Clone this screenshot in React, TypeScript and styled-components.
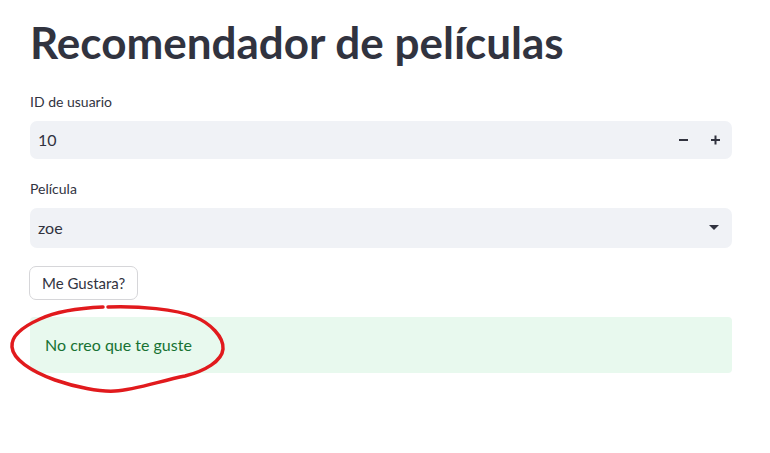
import styled, { createGlobalStyle } from "styled-components";

const GlobalStyle = createGlobalStyle`
  html, body {
    margin: 0;
    padding: 0;
    background: #ffffff;
  }
  body {
    font-family: Lato, "Noto Sans", "Liberation Sans", sans-serif;
    color: #31333f;
  }
`;

const Page = styled.main`
  padding: 16px 38px 40px 30px;
  width: 702px;
`;

const Title = styled.h1`
  margin: 0 0 24px;
  font-size: 44px;
  font-weight: 700;
  line-height: 1.2;
  color: #31333f;
`;

const Field = styled.div<{ $after: number }>`
  display: flex;
  flex-direction: column;
  gap: 10px;
  margin-bottom: ${(p) => p.$after}px;
`;

const Label = styled.label`
  font-size: 14px;
  line-height: 18px;
  color: #31333f;
`;

const InputBox = styled.div<{ $height: number }>`
  display: flex;
  align-items: center;
  height: ${(p) => p.$height}px;
  background: #f0f2f6;
  border-radius: 7px;
  padding-left: 8px;
  font-size: 16px;
  color: #31333f;
`;

const Value = styled.span`
  flex: 1;
`;

const StepButton = styled.button`
  width: 32px;
  height: 100%;
  border: none;
  background: transparent;
  display: flex;
  align-items: center;
  justify-content: center;
  padding: 0;
  color: #31333f;
  cursor: pointer;
`;

const Caret = styled.span`
  width: 0;
  height: 0;
  border-left: 5px solid transparent;
  border-right: 5px solid transparent;
  border-top: 5px solid #31333f;
  margin-right: 13px;
`;

const Button = styled.button`
  font-family: inherit;
  font-size: 15px;
  color: #31333f;
  background: #ffffff;
  border: 1px solid #d6d6d9;
  border-radius: 7px;
  height: 34px;
  padding: 0 12px;
  margin-left: -1px;
  cursor: pointer;
`;

const ButtonRow = styled.div`
  display: flex;
  margin-bottom: 17px;
`;

const AlertWrap = styled.div`
  position: relative;
`;

const Alert = styled.div`
  background: #e8f9ee;
  color: #177233;
  border-radius: 4px;
  height: 56px;
  padding: 0 15px;
  display: flex;
  align-items: center;
  font-size: 16px;
`;

const Scribble = styled.svg`
  position: absolute;
  left: -22px;
  top: -14px;
  width: 220px;
  height: 94px;
  pointer-events: none;
  overflow: visible;
`;

function Minus() {
  return (
    <svg width="10" height="10" viewBox="0 0 10 10">
      <rect x="0" y="4" width="9" height="2" fill="currentColor" />
    </svg>
  );
}

function Plus() {
  return (
    <svg width="10" height="10" viewBox="0 0 10 10">
      <rect x="0" y="4" width="9" height="2" fill="currentColor" />
      <rect x="3.5" y="0.5" width="2" height="9" fill="currentColor" />
    </svg>
  );
}

export default function App() {
  return (
    <>
      <GlobalStyle />
      <Page>
        <Title>Recomendador de películas</Title>
        <Field $after={21}>
          <Label>ID de usuario</Label>
          <InputBox $height={38}>
            <Value>10</Value>
            <StepButton aria-label="menos">
              <Minus />
            </StepButton>
            <StepButton aria-label="más">
              <Plus />
            </StepButton>
          </InputBox>
        </Field>
        <Field $after={18}>
          <Label>Película</Label>
          <InputBox $height={40}>
            <Value>zoe</Value>
            <Caret />
          </InputBox>
        </Field>
        <ButtonRow>
          <Button>Me Gustara?</Button>
        </ButtonRow>
        <AlertWrap>
          <Alert>No creo que te guste</Alert>
          <Scribble viewBox="8 302 220 94">
            <path
              d="M 103 306 C 80 307, 55 311, 40 318 C 22 326, 11 336, 12 346 C 13 358, 30 370, 55 379 C 75 386, 100 391, 115 390 C 135 389, 160 380, 185 375 C 205 370, 222 360, 223 348 C 224 336, 210 322, 195 316 C 175 308, 140 305, 108 306"
              fill="none"
              stroke="#e11a1d"
              strokeWidth="3.5"
              strokeLinecap="round"
              strokeLinejoin="round"
            />
          </Scribble>
        </AlertWrap>
      </Page>
    </>
  );
}
